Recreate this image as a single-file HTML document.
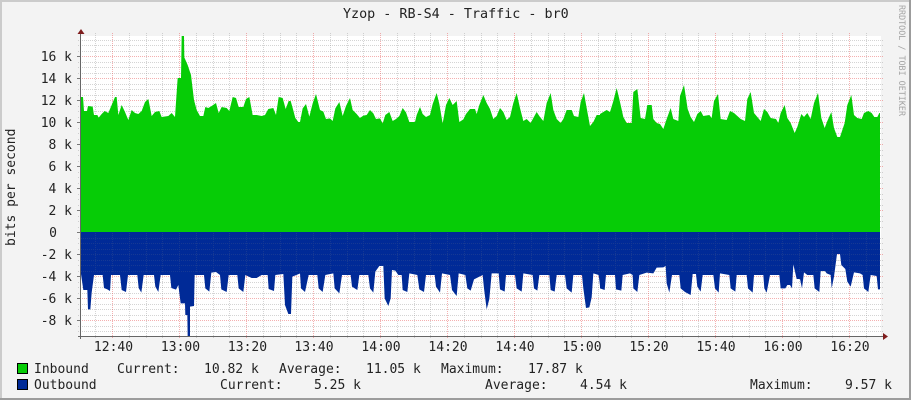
<!DOCTYPE html>
<html><head><meta charset="utf-8"><title>Yzop - RB-S4 - Traffic - br0</title>
<style>
html,body{margin:0;padding:0;background:#f3f3f3}
svg{display:block}
text{font-family:"DejaVu Sans Mono","Liberation Mono",monospace;font-size:13px;fill:#222;white-space:pre}
</style></head><body>
<svg width="911" height="400" viewBox="0 0 911 400" xmlns="http://www.w3.org/2000/svg">
<rect width="911" height="400" fill="#f3f3f3"/>
<rect x="0" y="0" width="911" height="2" fill="#cbcbcb"/>
<rect x="0" y="0" width="2" height="400" fill="#cbcbcb"/>
<rect x="909" y="0" width="2" height="400" fill="#9c9c9c"/>
<rect x="0" y="398" width="911" height="2" fill="#9c9c9c"/>
<rect x="81" y="36" width="800" height="300" fill="#fff"/>

<!-- grid (under the areas) -->
<path fill="none" stroke="#999" stroke-opacity=".42" stroke-dasharray="1 1" stroke-width="1" shape-rendering="crispEdges" d="M78 40.5H883M78 45.5H883M78 51.5H883M78 62.5H883M78 67.5H883M78 73.5H883M78 84.5H883M78 89.5H883M78 95.5H883M78 106.5H883M78 111.5H883M78 117.5H883M78 128.5H883M78 133.5H883M78 139.5H883M78 150.5H883M78 155.5H883M78 161.5H883M78 172.5H883M78 177.5H883M78 183.5H883M78 194.5H883M78 199.5H883M78 205.5H883M78 216.5H883M78 221.5H883M78 227.5H883M78 238.5H883M78 243.5H883M78 249.5H883M78 260.5H883M78 265.5H883M78 271.5H883M78 282.5H883M78 287.5H883M78 293.5H883M78 304.5H883M78 309.5H883M78 315.5H883M78 326.5H883M78 331.5H883"/>
<path fill="none" stroke="#999" stroke-opacity=".42" stroke-dasharray="1 1" stroke-width="1" shape-rendering="crispEdges" d="M95.5 33V338M129.5 33V338M146.5 33V338M162.5 33V338M196.5 33V338M213.5 33V338M229.5 33V338M263.5 33V338M280.5 33V338M296.5 33V338M330.5 33V338M347.5 33V338M363.5 33V338M397.5 33V338M414.5 33V338M430.5 33V338M464.5 33V338M481.5 33V338M497.5 33V338M531.5 33V338M548.5 33V338M564.5 33V338M598.5 33V338M615.5 33V338M631.5 33V338M665.5 33V338M682.5 33V338M698.5 33V338M732.5 33V338M749.5 33V338M765.5 33V338M799.5 33V338M816.5 33V338M832.5 33V338M866.5 33V338"/>
<path fill="none" stroke="#e65050" stroke-opacity=".45" stroke-dasharray="1 1" stroke-width="1" shape-rendering="crispEdges" d="M78 56.5H883M78 78.5H883M78 100.5H883M78 122.5H883M78 144.5H883M78 166.5H883M78 188.5H883M78 210.5H883M78 254.5H883M78 276.5H883M78 298.5H883M78 320.5H883M112.5 33V339M179.5 33V339M246.5 33V339M313.5 33V339M380.5 33V339M447.5 33V339M514.5 33V339M581.5 33V339M648.5 33V339M715.5 33V339M782.5 33V339M849.5 33V339"/>

<!-- inbound -->
<g fill="#06cc06">
<polygon transform="translate(0,0) scale(.33333)" points="243,696 243,291 249,291 252,333 261,333 264,318 278,320 282,345 292,345 296,353 305,342 314,333 325,339 335,315 345,291 350,291 355,345 365,315 375,336 385,360 395,330 405,339 415,342 425,333 435,306 445,297 455,348 465,336 478,333 485,351 505,348 515,339 525,351 533,234 543,234 545,108 552,108 553,172 563,195 573,225 582,300 590,330 600,348 610,348 616,321 625,324 635,318 648,309 656,339 665,321 680,324 688,333 698,291 708,294 716,321 730,321 738,297 748,291 758,345 770,345 785,348 795,345 805,327 820,324 828,345 836,291 848,294 857,327 866,303 872,303 878,324 886,354 895,366 901,366 901,696"/>
<polygon transform="translate(300,60) scale(.33333)" points="0,516 0,186 8,145 18,132 28,170 38,130 48,102 60,150 70,155 78,177 90,175 98,183 106,145 118,126 128,168 138,138 150,114 158,150 170,162 180,174 190,167 200,165 210,150 220,160 228,177 240,175 248,190 256,165 268,156 278,183 288,177 298,168 308,144 318,157 328,186 345,186 350,165 360,141 368,162 378,171 390,165 398,132 410,99 418,132 428,190 438,135 448,114 458,135 470,123 478,186 490,178 498,162 510,147 525,147 530,162 538,135 550,105 560,129 570,147 580,177 590,168 600,144 610,156 620,180 630,171 640,129 650,99 660,144 670,183 680,177 692,189 700,174 710,156 720,171 730,183 740,129 752,99 760,150 770,177 782,189 790,177 800,150 815,150 822,168 835,171 842,126 852,99 860,144 870,198 880,186 890,165 901,165 901,516"/>
<polygon transform="translate(600,0) scale(.33333)" points="0,696 0,342 10,336 20,330 30,336 40,303 50,264 60,306 70,351 80,369 95,369 100,276 112,267 122,354 135,357 142,315 155,315 160,357 170,369 180,372 190,387 200,357 212,324 220,357 235,363 240,288 252,255 263,327 272,351 282,366 292,342 302,333 310,348 328,345 335,354 342,303 354,282 362,357 380,360 390,333 402,339 412,348 422,357 435,363 442,297 452,276 462,339 472,351 482,363 492,327 502,336 512,354 528,357 535,369 542,339 554,315 562,354 572,369 584,399 592,381 604,342 612,351 622,339 632,357 642,309 654,279 664,354 674,384 682,363 694,336 702,384 712,411 720,411 726,393 734,369 742,315 754,285 762,345 772,354 785,357 792,339 805,333 815,339 823,351 832,351 838,339 840,339 840,696"/>
</g>

<!-- outbound -->
<g fill="#002a97">
<polygon transform="translate(0,220) scale(.33333)" points="243,36 243,162 250,210 262,210 264,268 271,268 275,218 282,165 308,165 312,204 322,208 330,213 333,165 360,165 365,210 378,216 384,165 412,165 416,204 424,218 431,165 462,165 466,200 475,216 482,165 510,165 514,204 528,209 535,195 542,250 555,250 556,285 562,285 563,348 570,348 570,260 582,258 584,165 612,165 616,205 628,215 634,158 648,156 660,165 664,208 680,216 686,165 712,165 716,205 730,216 736,165 755,174 770,174 785,165 803,165 806,207 822,213 826,165 850,162 855,255 865,282 873,282 877,170 901,160 901,36"/>
<polygon transform="translate(300,220) scale(.33333)" points="0,36 0,160 3,205 15,216 26,165 52,165 56,205 68,216 76,165 100,160 104,205 118,220 126,165 152,165 156,200 172,210 178,165 205,165 210,205 220,218 226,155 238,138 250,138 254,235 265,258 272,235 276,150 286,152 295,165 305,165 308,210 322,216 328,160 352,165 358,208 372,216 378,165 404,165 408,200 420,218 426,160 450,165 456,210 470,228 476,160 496,165 502,205 512,212 522,178 548,165 552,205 560,268 568,237 575,160 596,160 600,208 614,215 618,165 645,165 650,205 665,215 670,160 698,165 702,205 712,212 718,165 748,165 752,210 764,215 770,165 795,165 800,205 815,218 820,165 846,165 850,205 858,264 868,262 875,232 880,160 896,165 901,205 901,36"/>
<polygon transform="translate(600,220) scale(.33333)" points="0,36 0,205 14,210 18,165 45,165 48,208 64,212 68,165 90,160 98,165 100,205 112,216 118,165 140,158 160,160 170,143 190,142 197,138 200,190 208,218 216,165 238,165 242,205 255,216 272,225 278,162 288,162 292,200 302,215 308,165 340,165 345,205 356,218 360,160 388,165 392,205 406,215 410,165 440,165 444,205 458,218 462,165 490,165 493,205 500,218 510,165 538,165 542,205 556,205 562,195 570,195 576,205 580,133 590,177 600,177 606,205 612,157 622,165 640,165 644,205 658,216 662,153 675,153 680,160 692,165 695,205 702,170 711,102 720,102 724,135 736,147 742,185 752,200 762,157 780,160 788,165 792,205 805,216 812,165 830,168 834,208 840,208 840,36"/>
</g>
<!-- faint grid showing through the solid blue band -->
<path fill="none" stroke="#8a8a8a" stroke-opacity=".16" stroke-dasharray="1 1" stroke-width="1" shape-rendering="crispEdges" d="M81 238.5H880M81 243.5H880M81 249.5H880M81 254.5H880M81 260.5H880M81 265.5H880M81 271.5H880M95.5 233V272M112.5 233V272M129.5 233V272M146.5 233V272M162.5 233V272M179.5 233V272M196.5 233V272M213.5 233V272M229.5 233V272M246.5 233V272M263.5 233V272M280.5 233V272M296.5 233V272M313.5 233V272M330.5 233V272M347.5 233V272M363.5 233V272M397.5 233V272M414.5 233V272M430.5 233V272M447.5 233V272M464.5 233V272M481.5 233V272M497.5 233V272M514.5 233V272M531.5 233V272M548.5 233V272M564.5 233V272M581.5 233V272M598.5 233V272M615.5 233V272M631.5 233V272M648.5 233V272M665.5 233V272M682.5 233V272M698.5 233V272M715.5 233V272M732.5 233V272M749.5 233V272M765.5 233V272M782.5 233V272M799.5 233V272M816.5 233V272M832.5 233V272M849.5 233V272M866.5 233V272"/>

<!-- axis ticks -->
<path fill="none" stroke="#777" stroke-width="1" shape-rendering="crispEdges" d="M77 56.5H81M77 78.5H81M77 100.5H81M77 122.5H81M77 144.5H81M77 166.5H81M77 188.5H81M77 210.5H81M77 232.5H81M77 254.5H81M77 276.5H81M77 298.5H81M77 320.5H81"/>
<!-- axes -->
<path fill="none" stroke="#666" stroke-width="1" shape-rendering="crispEdges" d="M80.5 34V339M78 336.5H884"/>
<polygon points="81,29 84.5,34 77.5,34" fill="#7f1d1d"/>
<polygon points="888,336.5 883,333 883,340" fill="#7f1d1d"/>

<!-- title -->
<text x="343" y="18" style="font-size:13.4px">Yzop - RB-S4 - Traffic - br0</text>

<!-- y labels -->
<g text-anchor="end">
<text x="72" y="61">16 k</text><text x="72" y="83">14 k</text><text x="72" y="105">12 k</text><text x="72" y="127">10 k</text>
<text x="72" y="149">8 k</text><text x="72" y="171">6 k</text><text x="72" y="193">4 k</text><text x="72" y="215">2 k</text>
<text x="57" y="237">0</text>
<text x="72" y="259">-2 k</text><text x="72" y="281">-4 k</text><text x="72" y="303">-6 k</text><text x="72" y="325">-8 k</text>
</g>
<text transform="translate(15,246) rotate(-90)" x="0" y="0">bits per second</text>
<text transform="translate(899,5) rotate(90)" x="0" y="0" textLength="111" lengthAdjust="spacingAndGlyphs" style="font-size:8.5px;fill:#a4a4a4">RRDTOOL / TOBI OETIKER</text>

<!-- x labels -->
<g text-anchor="middle">
<text x="113.5" y="351">12:40</text><text x="180.5" y="351">13:00</text><text x="247.5" y="351">13:20</text><text x="314" y="351">13:40</text>
<text x="381" y="351">14:00</text><text x="448" y="351">14:20</text><text x="515" y="351">14:40</text><text x="582" y="351">15:00</text>
<text x="649" y="351">15:20</text><text x="716" y="351">15:40</text><text x="783" y="351">16:00</text><text x="850" y="351">16:20</text>
</g>

<!-- legend -->
<rect x="17.5" y="363.5" width="10" height="10" fill="#06cc06" stroke="#000" shape-rendering="crispEdges"/>
<rect x="17.5" y="379.5" width="10" height="10" fill="#002a97" stroke="#000" shape-rendering="crispEdges"/>
<text x="34" y="373">Inbound</text>
<text x="117" y="373">Current:</text>
<text x="204" y="373">10.82 k</text>
<text x="279" y="373">Average:</text>
<text x="366" y="373">11.05 k</text>
<text x="441" y="373">Maximum:</text>
<text x="528" y="373">17.87 k</text>
<text x="34" y="389">Outbound</text>
<text x="220" y="389">Current:</text>
<text x="314" y="389">5.25 k</text>
<text x="485" y="389">Average:</text>
<text x="580" y="389">4.54 k</text>
<text x="750" y="389">Maximum:</text>
<text x="845" y="389">9.57 k</text>
</svg>
</body></html>
